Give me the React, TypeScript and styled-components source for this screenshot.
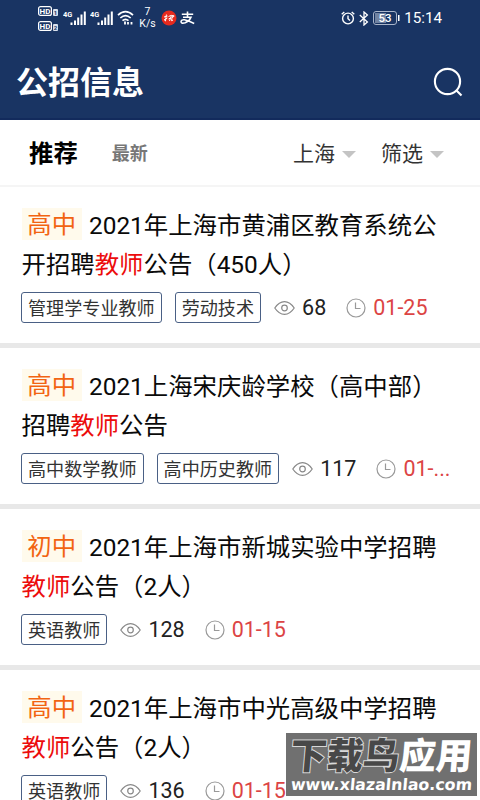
import styled, { createGlobalStyle } from "styled-components";

interface INotice {
  id: number;
  level: string;
  lines: string[];
  tags: string[];
  views: number;
  date: string;
}

const KEYWORD = "教师";

const notices: INotice[] = [
  {
    id: 1,
    level: "高中",
    lines: ["2021年上海市黄浦区教育系统公", "开招聘教师公告（450人）"],
    tags: ["管理学专业教师", "劳动技术"],
    views: 68,
    date: "01-25",
  },
  {
    id: 2,
    level: "高中",
    lines: ["2021上海宋庆龄学校（高中部）", "招聘教师公告"],
    tags: ["高中数学教师", "高中历史教师"],
    views: 117,
    date: "01-...",
  },
  {
    id: 3,
    level: "初中",
    lines: ["2021年上海市新城实验中学招聘", "教师公告（2人）"],
    tags: ["英语教师"],
    views: 128,
    date: "01-15",
  },
  {
    id: 4,
    level: "高中",
    lines: ["2021年上海市中光高级中学招聘", "教师公告（2人）"],
    tags: ["英语教师"],
    views: 136,
    date: "01-15",
  },
];

const GlobalStyle = createGlobalStyle`
  * {
    box-sizing: border-box;
  }
  body {
    margin: 0;
    background-color: white;
    font-family: Roboto, "Noto Sans CJK SC", sans-serif;
  }
`;

const Wrapper = styled.div`
  position: relative;
  width: 480px;
  height: 800px;
  overflow: hidden;
  background-color: white;
`;

const Header = styled.header`
  height: 120px;
  background-color: #193463;
  border-bottom: 2px solid #122a5c;
  color: white;
`;

const StatusBar = styled.div`
  display: flex;
  align-items: center;
  justify-content: space-between;
  height: 36px;
  padding: 0 38px;
`;

const StatusGroup = styled.div<{ $gap: number }>`
  display: flex;
  align-items: center;
  gap: ${(props) => props.$gap}px;
`;

const Speed = styled.div`
  width: 17px;
  margin: 0 2px 0 2px;
  font-size: 10.5px;
  line-height: 12px;
  text-align: center;
`;

const Clock = styled.span`
  font-size: 15.2px;
  line-height: 18px;
`;

const TitleBar = styled.div`
  display: flex;
  align-items: center;
  justify-content: space-between;
  height: 82px;
  padding: 9px 17px 0 16px;
`;

const PageTitle = styled.h1`
  margin: 2px 0 0;
  font-size: 32px;
  font-weight: 700;
  line-height: 40px;
`;

const Filters = styled.nav`
  display: flex;
  align-items: center;
  height: 67px;
  padding: 3px 36px 0 29px;
  border-bottom: 2px solid #f5f5f5;
`;

const Tab = styled.span<{ $active?: boolean }>`
  margin-right: 34px;
  color: ${(props) => (props.$active ? "#000" : "#777")};
  font-size: ${(props) => (props.$active ? 24.4 : 18)}px;
  font-weight: 700;
  line-height: 36px;
`;

const Dropdowns = styled.div`
  display: flex;
  gap: 25px;
  margin-left: auto;
`;

const Dropdown = styled.span`
  display: flex;
  align-items: center;
  gap: 7px;
  color: #333;
  font-size: 21px;
  line-height: 32px;

  &::after {
    content: "";
    border: 7px solid transparent;
    border-top-color: #c4c4c4;
    border-bottom: 0;
  }
`;

const Card = styled.article`
  height: 161px;
  padding: 19px 20px 0 21px;
  border-bottom: 5px solid #e8e8e8;
`;

const CardTitle = styled.h2`
  margin: 0;
  color: #0a0a0a;
  font-size: 24.4px;
  font-weight: 400;
  line-height: 39px;
  white-space: nowrap;
`;

const Line = styled.div`
  display: flex;
  align-items: center;
  height: 39px;
  padding-left: 0.5px;
`;

const Level = styled.span`
  width: 60.5px;
  height: 32px;
  margin: 0 7px 3px 0;
  background-color: #fffaec;
  color: #f26412;
  line-height: 34px;
  text-align: center;
`;

const Highlight = styled.em`
  color: #ec0c0c;
  font-style: normal;
`;

const Meta = styled.div`
  display: flex;
  align-items: center;
  height: 31px;
  margin-top: 8px;
`;

const Tag = styled.span`
  height: 31px;
  margin-right: 13px;
  padding: 0 6px;
  border: 1px solid #4a6085;
  border-radius: 3px;
  color: #333;
  font-size: 18.1px;
  line-height: 31px;
  white-space: nowrap;
`;

const Views = styled.span`
  margin: 0 20px 0 7px;
  color: #222;
  font-size: 21.5px;
`;

const PostedAt = styled.span`
  margin-left: 7px;
  color: #dc4444;
  font-size: 21.5px;
`;

const Watermark = styled.aside`
  position: absolute;
  top: 733px;
  left: 286px;
  width: 191px;
  height: 63px;
  background-color: #707070;
  text-align: center;
  white-space: nowrap;
`;

const WatermarkName = styled.div`
  padding-top: 4px;
  font-size: 36.4px;
  font-weight: 900;
  line-height: 40px;
  transform: skewX(-5deg);
`;

const WatermarkPart = styled.span<{ $dark?: boolean }>`
  color: ${(props) => (props.$dark ? "#484848" : "white")};
  -webkit-text-stroke: ${(props) => (props.$dark ? "2px #d8d8d8" : "0")};
  paint-order: stroke fill;
`;

const WatermarkUrl = styled.div`
  color: white;
  font-family: "DejaVu Sans", sans-serif;
  font-size: 15.8px;
  font-weight: 700;
  line-height: 15px;
  transform: skewX(-5deg);
`;

function HdIcon() {
  return (
    <svg width="22" height="27" viewBox="0 0 22 27">
      {[1, 16].map((y, i) => (
        <g key={y} transform={`translate(0 ${y})`}>
          <rect x="0.6" y="0.6" width="12.8" height="8.8" rx="2" fill="none" stroke="white" strokeWidth="1.2" />
          <text x="7" y="8" fill="white" fontSize="8" fontWeight="700" textAnchor="middle">
            HD
          </text>
          <rect x="15" y="3" width="5" height="7" rx="1" fill="#d9e0ec" />
          <text x="17.5" y="9" fill="#193463" fontSize="6" fontWeight="700" textAnchor="middle">
            {i + 1}
          </text>
        </g>
      ))}
    </svg>
  );
}

function SignalIcon() {
  return (
    <svg width="24" height="16" viewBox="0 0 24 16">
      <text x="0" y="7" fill="white" fontSize="7.4" fontWeight="700">
        4G
      </text>
      <path
        d="M8.5 12.5v2.5M12 10.5v4.5M15.2 7.5v7.5M18.5 4.5v10.5M21.8 1.5v13.5"
        stroke="white"
        strokeWidth="2"
      />
    </svg>
  );
}

function WifiIcon() {
  return (
    <svg width="17" height="16" viewBox="0 0 17 16" fill="none" stroke="white">
      <path
        d="M1 5.2Q8.5-1.8 16 5.2M3.3 8Q8.5 3.2 13.7 8M5.5 10.7Q8.5 8 11.5 10.7"
        strokeWidth="1.7"
      />
      <path d="M8 11.5v3M11 14.5v-2.5M14.5 14.5v-2.5" strokeWidth="1.8" />
    </svg>
  );
}

function RedBadge() {
  return (
    <svg width="16" height="16" viewBox="0 0 16 16">
      <circle cx="8" cy="8" r="7.5" fill="#e52a1e" />
      <path
        d="M3 7l3.5-1M5.4 4.5L4.5 11 3.4 10M3 10l3.4-2M7.5 6.5l3-1.2-2 5.7M7.5 9l2-1M11.5 5l-1 5.7 1.5-.6M11 7.5l2.4-1.4M12 5l.6 1"
        fill="none"
        stroke="white"
      />
    </svg>
  );
}

function PayIcon() {
  return (
    <svg width="15" height="14" viewBox="0 0 15 14" fill="none" stroke="white" strokeWidth="1.6">
      <path d="M1.8 3.3h11.4M7.5.4v5.5M3 6.2h8Q9.2 10.4 5.2 11.8 1.2 13 1 10.8 1.2 8.4 4.4 8.8 8 9.6 14.2 12.4" />
    </svg>
  );
}

function AlarmIcon() {
  return (
    <svg width="14" height="14" viewBox="0 0 14 14" fill="none" stroke="white" strokeWidth="1.4">
      <circle cx="7" cy="7.5" r="5.4" />
      <path d="M7 4.5v3.2l2 1.8M.7 3.2L3.3 1M13.3 3.2L10.7 1" />
    </svg>
  );
}

function BluetoothIcon() {
  return (
    <svg width="10" height="15" viewBox="0 0 10 15" fill="none" stroke="white" strokeWidth="1.3">
      <path d="M.8 4l7.6 7-3.4 3V1l3.4 3-7.6 7" />
    </svg>
  );
}

function BatteryIcon() {
  return (
    <svg width="27" height="14" viewBox="0 0 27 14">
      <rect x="0.5" y="0.5" width="23" height="13" rx="2.5" fill="none" stroke="#a9b5ca" />
      <rect x="2" y="2" width="11" height="10" fill="#7183a2" />
      <rect x="25" y="4" width="1.5" height="6" fill="white" />
      <text x="12" y="11.2" fill="white" fontSize="11.5" fontWeight="500" textAnchor="middle">
        53
      </text>
    </svg>
  );
}

function SearchIcon() {
  return (
    <svg width="30" height="30" viewBox="0 0 30 30" fill="none" stroke="white" strokeWidth="2.1">
      <circle cx="14.5" cy="14.5" r="12.6" />
      <path d="M23 23l5.5 5.5" />
    </svg>
  );
}

function EyeIcon() {
  return (
    <svg width="21" height="16" viewBox="0 0 21 16" fill="none" stroke="#888" strokeWidth="1.2">
      <path d="M.8 8Q5 1.6 10.5 1.6T20.2 8Q16 14.4 10.5 14.4T.8 8z" />
      <circle cx="10.5" cy="8" r="2.8" />
    </svg>
  );
}

function TimeIcon() {
  return (
    <svg width="20" height="20" viewBox="0 0 20 20" fill="none" stroke="#999" strokeWidth="1.2">
      <circle cx="10" cy="10" r="9" />
      <path d="M9.5 4.5v6h5" />
    </svg>
  );
}

function MarkedText({ text }: { text: string }) {
  const parts = text.split(KEYWORD);
  return (
    <span>
      {parts.map((part, index) => (
        <span key={index}>
          {index > 0 ? <Highlight>{KEYWORD}</Highlight> : null}
          {part}
        </span>
      ))}
    </span>
  );
}

function Notice({ level, lines, tags, views, date }: INotice) {
  return (
    <Card>
      <CardTitle>
        {lines.map((line, index) => (
          <Line key={line}>
            {index === 0 ? <Level>{level}</Level> : null}
            <MarkedText text={line} />
          </Line>
        ))}
      </CardTitle>
      <Meta>
        {tags.map((tag) => (
          <Tag key={tag}>{tag}</Tag>
        ))}
        <EyeIcon />
        <Views>{views}</Views>
        <TimeIcon />
        <PostedAt>{date}</PostedAt>
      </Meta>
    </Card>
  );
}

export default function App() {
  return (
    <Wrapper>
      <GlobalStyle />
      <Header>
        <StatusBar>
          <StatusGroup $gap={3}>
            <HdIcon />
            <SignalIcon />
            <SignalIcon />
            <WifiIcon />
            <Speed>
              7<br />
              K/s
            </Speed>
            <RedBadge />
            <PayIcon />
          </StatusGroup>
          <StatusGroup $gap={4}>
            <AlarmIcon />
            <BluetoothIcon />
            <BatteryIcon />
            <Clock>15:14</Clock>
          </StatusGroup>
        </StatusBar>
        <TitleBar>
          <PageTitle>公招信息</PageTitle>
          <SearchIcon />
        </TitleBar>
      </Header>
      <Filters>
        <Tab $active>推荐</Tab>
        <Tab>最新</Tab>
        <Dropdowns>
          <Dropdown>上海</Dropdown>
          <Dropdown>筛选</Dropdown>
        </Dropdowns>
      </Filters>
      {notices.map((notice) => (
        <Notice key={notice.id} {...notice} />
      ))}
      <Watermark>
        <WatermarkName>
          <WatermarkPart $dark>下载鸟</WatermarkPart>
          <WatermarkPart>应用</WatermarkPart>
        </WatermarkName>
        <WatermarkUrl>www.xlazalnlao.com</WatermarkUrl>
      </Watermark>
    </Wrapper>
  );
}
